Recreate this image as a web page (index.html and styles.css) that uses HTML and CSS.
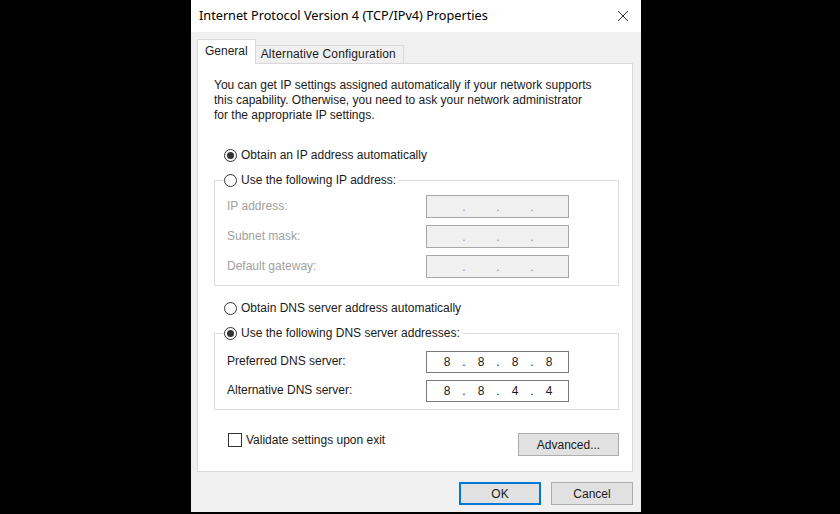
FILE: index.html
```html
<!DOCTYPE html>
<html lang="en">

<head>
    <meta charset="UTF-8">
    <meta name="viewport" content="width=device-width, initial-scale=1.0">
    <title>Internet Protocol Version 4 (TCP/IPv4) Properties</title>
    <link rel="stylesheet" href="styles.css">
</head>

<body>
    <div class="dialog">
        <div class="title-bar">
            <div class="title">Internet Protocol Version 4 (TCP/IPv4) Properties</div>
            <svg class="close" width="12" height="12" viewBox="0 0 12 12">
                <path d="M1 1 L11 11 M11 1 L1 11" stroke="#333" stroke-width="1" fill="none" />
            </svg>
        </div>

        <div class="content">
            <div class="tabs">
                <div class="tab tab-active">General</div>
                <div class="tab">Alternative Configuration</div>
            </div>

            <div class="panel">
                <p class="intro">You can get IP settings assigned automatically if your network supports<br>
                    this capability. Otherwise, you need to ask your network administrator<br>
                    for the appropriate IP settings.</p>

                <div class="option option-first">
                    <span class="radio radio-on"></span>Obtain an IP address automatically
                </div>

                <fieldset class="group group-ip">
                    <legend class="option"><span class="radio"></span>Use the following IP address:</legend>
                    <div class="field disabled">
                        <span class="label">IP address:</span>
                        <div class="ip-box">
                            <span class="octet"></span><span class="dot">.</span>
                            <span class="octet"></span><span class="dot">.</span>
                            <span class="octet"></span><span class="dot">.</span>
                            <span class="octet"></span>
                        </div>
                    </div>
                    <div class="field disabled">
                        <span class="label">Subnet mask:</span>
                        <div class="ip-box">
                            <span class="octet"></span><span class="dot">.</span>
                            <span class="octet"></span><span class="dot">.</span>
                            <span class="octet"></span><span class="dot">.</span>
                            <span class="octet"></span>
                        </div>
                    </div>
                    <div class="field disabled">
                        <span class="label">Default gateway:</span>
                        <div class="ip-box">
                            <span class="octet"></span><span class="dot">.</span>
                            <span class="octet"></span><span class="dot">.</span>
                            <span class="octet"></span><span class="dot">.</span>
                            <span class="octet"></span>
                        </div>
                    </div>
                </fieldset>

                <div class="option option-dns">
                    <span class="radio"></span>Obtain DNS server address automatically
                </div>

                <fieldset class="group group-dns">
                    <legend class="option"><span class="radio radio-on"></span>Use the following DNS server addresses:</legend>
                    <div class="field">
                        <span class="label">Preferred DNS server:</span>
                        <div class="ip-box">
                            <span class="octet">8</span><span class="dot">.</span>
                            <span class="octet">8</span><span class="dot">.</span>
                            <span class="octet">8</span><span class="dot">.</span>
                            <span class="octet">8</span>
                        </div>
                    </div>
                    <div class="field">
                        <span class="label">Alternative DNS server:</span>
                        <div class="ip-box">
                            <span class="octet">8</span><span class="dot">.</span>
                            <span class="octet">8</span><span class="dot">.</span>
                            <span class="octet">4</span><span class="dot">.</span>
                            <span class="octet">4</span>
                        </div>
                    </div>
                </fieldset>

                <div class="panel-footer">
                    <div class="check-row"><span class="checkbox"></span>Validate settings upon exit</div>
                    <button class="button button-advanced">Advanced...</button>
                </div>
            </div>

            <div class="actions">
                <button class="button button-default">OK</button>
                <button class="button">Cancel</button>
            </div>
        </div>
    </div>
</body>

</html>
```

FILE: styles.css
```css
* {
    margin: 0;
    padding: 0;
    box-sizing: border-box;
}

body {
    background-color: #000;
    font-family: "Liberation Sans", Arial, sans-serif;
    font-size: 12px;
    color: #1a1a1a;
}

.dialog {
    width: 450px;
    height: 512px;
    margin-left: 191px;
    background-color: #f0f0f0;
}

.title-bar {
    height: 32px;
    background-color: #fff;
    display: flex;
    align-items: center;
    justify-content: space-between;
    padding: 0 12px 2px 8px;
}

.title {
    font-family: "Noto Sans", sans-serif;
    font-size: 12.7px;
    color: #000;
}

.close {
    margin-top: 1px;
}

.content {
    padding: 7px 8px 0 6px;
}

/* 选项卡 */
.tabs {
    display: flex;
    align-items: flex-end;
    height: 24px;
}

.tab {
    height: 18px;
    line-height: 16px;
    padding: 0 7px 0 5px;
    border: 1px solid #d9d9d9;
    border-bottom: none;
    background-color: #f0f0f0;
    margin-left: -1px;
    letter-spacing: 0.15px;
}

.tab-active {
    height: 25px;
    line-height: 22px;
    padding: 0 7px;
    margin-left: 0;
    margin-bottom: -1px;
    background-color: #fff;
    position: relative;
    z-index: 1;
    letter-spacing: 0;
}

.panel {
    height: 409px;
    background-color: #fff;
    border: 1px solid #d9d9d9;
    padding: 14px 13px 0 16px;
}

.intro {
    line-height: 15px;
}

.option {
    display: flex;
    align-items: center;
    height: 15px;
    line-height: 15px;
}

.option-first {
    margin-top: 25px;
    margin-left: 10px;
}

.option-dns {
    margin-top: 15px;
    margin-left: 10px;
}

.radio {
    width: 13px;
    height: 13px;
    border: 1px solid #333;
    border-radius: 50%;
    background-color: #fff;
    margin-right: 4px;
    display: flex;
    align-items: center;
    justify-content: center;
}

.radio-on::after {
    content: "";
    width: 7px;
    height: 7px;
    border-radius: 50%;
    background-color: #333;
}

.group {
    border: 1px solid #dcdcdc;
    padding: 7px 0 7px 12px;
}

.group legend {
    padding-right: 3px;
    margin-left: -3px;
}

.group-ip {
    margin-top: 10px;
}

.group-dns {
    margin-top: 10px;
    padding-top: 9px;
}

.field {
    display: grid;
    grid-template-columns: 199px 143px;
    align-items: center;
    height: 23px;
}

.group-ip .field + .field {
    margin-top: 7px;
}

.group-dns .field + .field {
    margin-top: 6px;
}

.field .label {
    margin-top: -1px;
}

.disabled .label {
    color: #a0a0a0;
}

.ip-box {
    display: flex;
    align-items: center;
    height: 23px;
    padding-left: 6px;
    border: 1px solid #7a7a7a;
    background-color: #fff;
}

.group-dns .ip-box {
    height: 22px;
}

.disabled .ip-box {
    border-color: #a6a6a6;
    background-color: #f0f0f0;
    color: #909090;
}

.octet {
    width: 28px;
    text-align: center;
}

.dot {
    width: 6px;
    text-align: center;
}

.panel-footer {
    display: flex;
    justify-content: space-between;
    align-items: flex-start;
    margin-top: 22px;
    padding-left: 14px;
}

.check-row {
    display: flex;
    align-items: center;
    height: 15px;
}

.checkbox {
    width: 14px;
    height: 14px;
    border: 1px solid #333;
    background-color: #fff;
    margin-right: 4px;
}

.button {
    font-family: "Liberation Sans", Arial, sans-serif;
    font-size: 12px;
    color: #1a1a1a;
    height: 23px;
    background-color: #e1e1e1;
    border: 1px solid #adadad;
}

.button-advanced {
    width: 101px;
    margin-top: 1px;
}

.actions {
    display: flex;
    justify-content: flex-end;
    gap: 10px;
    margin-top: 10px;
}

.actions .button {
    width: 82px;
}

.button-default {
    border-color: #0078d7;
    box-shadow: inset 0 0 0 1px #0078d7;
}
```
